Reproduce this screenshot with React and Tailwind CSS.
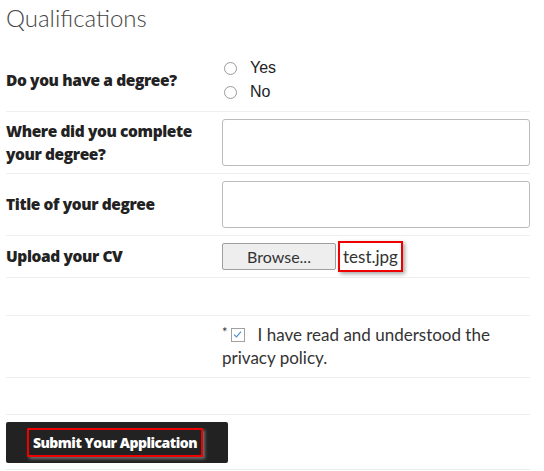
import React from "react";

function Radio({ label }) {
  return (
    <div className="flex items-center h-[24px]">
      <span className="w-[13px] h-[13px] rounded-full border border-[#9a9a9a] bg-white ml-[2px]" />
      <span className="ml-[13px] text-[16px] text-[#222]" style={{ fontFamily: '"Liberation Sans", Arial, sans-serif' }}>{label}</span>
    </div>
  );
}

const labelCls = "text-[15.5px] font-extrabold text-[#222] leading-[23px] tracking-[-0.4px]";
const heavy = { fontFamily: '"Open Sans", Lato, sans-serif' };

export default function App() {
  const lato = { fontFamily: 'Lato, "Open Sans", sans-serif' };
  return (
    <div className="w-[544px] h-[471px] bg-white overflow-hidden" style={lato}>
      <div className="px-[6px] w-[536px]">
        <h2 className="h-[49px] pt-[3px] text-[24px] font-light text-[#444] leading-[30px]">Qualifications</h2>

        <div className="flex items-center border-b border-[#eeeeee] pt-[7px] pb-[7px]">
          <div className={"w-[216px] " + labelCls} style={heavy}>Do you have a degree?</div>
          <div className="flex-1 flex flex-col">
            <Radio label="Yes" />
            <Radio label="No" />
          </div>
        </div>

        <div className="flex items-center border-b border-[#eeeeee] py-[7px]">
          <div className={"w-[216px] pr-[16px] " + labelCls} style={heavy}>Where did you complete your degree?</div>
          <div className="flex-1 h-[47px] border border-[#bbbbbb] rounded-[3px]" />
        </div>

        <div className="flex items-center border-b border-[#eeeeee] py-[7px]">
          <div className={"w-[216px] " + labelCls} style={heavy}>Title of your degree</div>
          <div className="flex-1 h-[47px] border border-[#bbbbbb] rounded-[3px]" />
        </div>

        <div className="flex items-center border-b border-[#eeeeee] py-[7px]">
          <div className={"w-[216px] " + labelCls} style={heavy}>Upload your CV</div>
          <div className="flex-1 flex items-center h-[27px]">
            <div className="w-[114px] h-[27px] border border-[#9f9f9f] rounded-[2px] bg-[#eeeeee] flex items-center justify-center text-[16px] text-[#333]">Browse...</div>
            <div className="ml-[2px] -my-[2px] w-[65px] h-[31px] border-2 border-[#ee0000] shadow-[2px_2px_4px_rgba(0,0,0,0.35)] flex items-center pl-[3px] text-[17px] text-[#333]">test.jpg</div>
          </div>
        </div>

        <div className="h-[38px] border-b border-[#eeeeee]" />

        <div className="flex border-b border-[#eeeeee] pt-[7px] pb-[8px]">
          <div className="w-[216px]" />
          <div className="flex-1 text-[17px] text-[#333] leading-[23px]">
            <div className="flex items-center h-[23px]">
              <span className="text-[13px] leading-[13px] self-start mt-[3px] mr-[3px]">*</span>
              <span className="inline-block w-[14px] h-[14px] border border-[#a0a0a0] relative bg-white">
                <svg viewBox="0 0 14 14" className="absolute inset-0 w-[12px] h-[12px]">
                  <path d="M2.5 6.5 L5.2 9.2 L10.5 3" fill="none" stroke="#4a8fd8" strokeWidth="1.3" />
                </svg>
              </span>
              <span className="ml-[13px]">I have read and understood the</span>
            </div>
            <div>privacy policy.</div>
          </div>
        </div>

        <div className="h-[37px] border-b border-[#eeeeee]" />

        <div className="border-b border-[#eeeeee] pt-[7px] pb-[6px]">
          <div className="w-[222px] h-[41px] bg-[#222222] rounded-[2px] flex items-center pl-[21px]">
            <div className="h-[29px] w-[176px] border-2 border-[#ee0000] shadow-[2px_2px_3px_rgba(120,120,120,0.9)] flex items-center justify-center text-[14px] font-extrabold text-white tracking-[-0.5px]" style={heavy}>Submit Your Application</div>
          </div>
        </div>
      </div>
    </div>
  );
}
